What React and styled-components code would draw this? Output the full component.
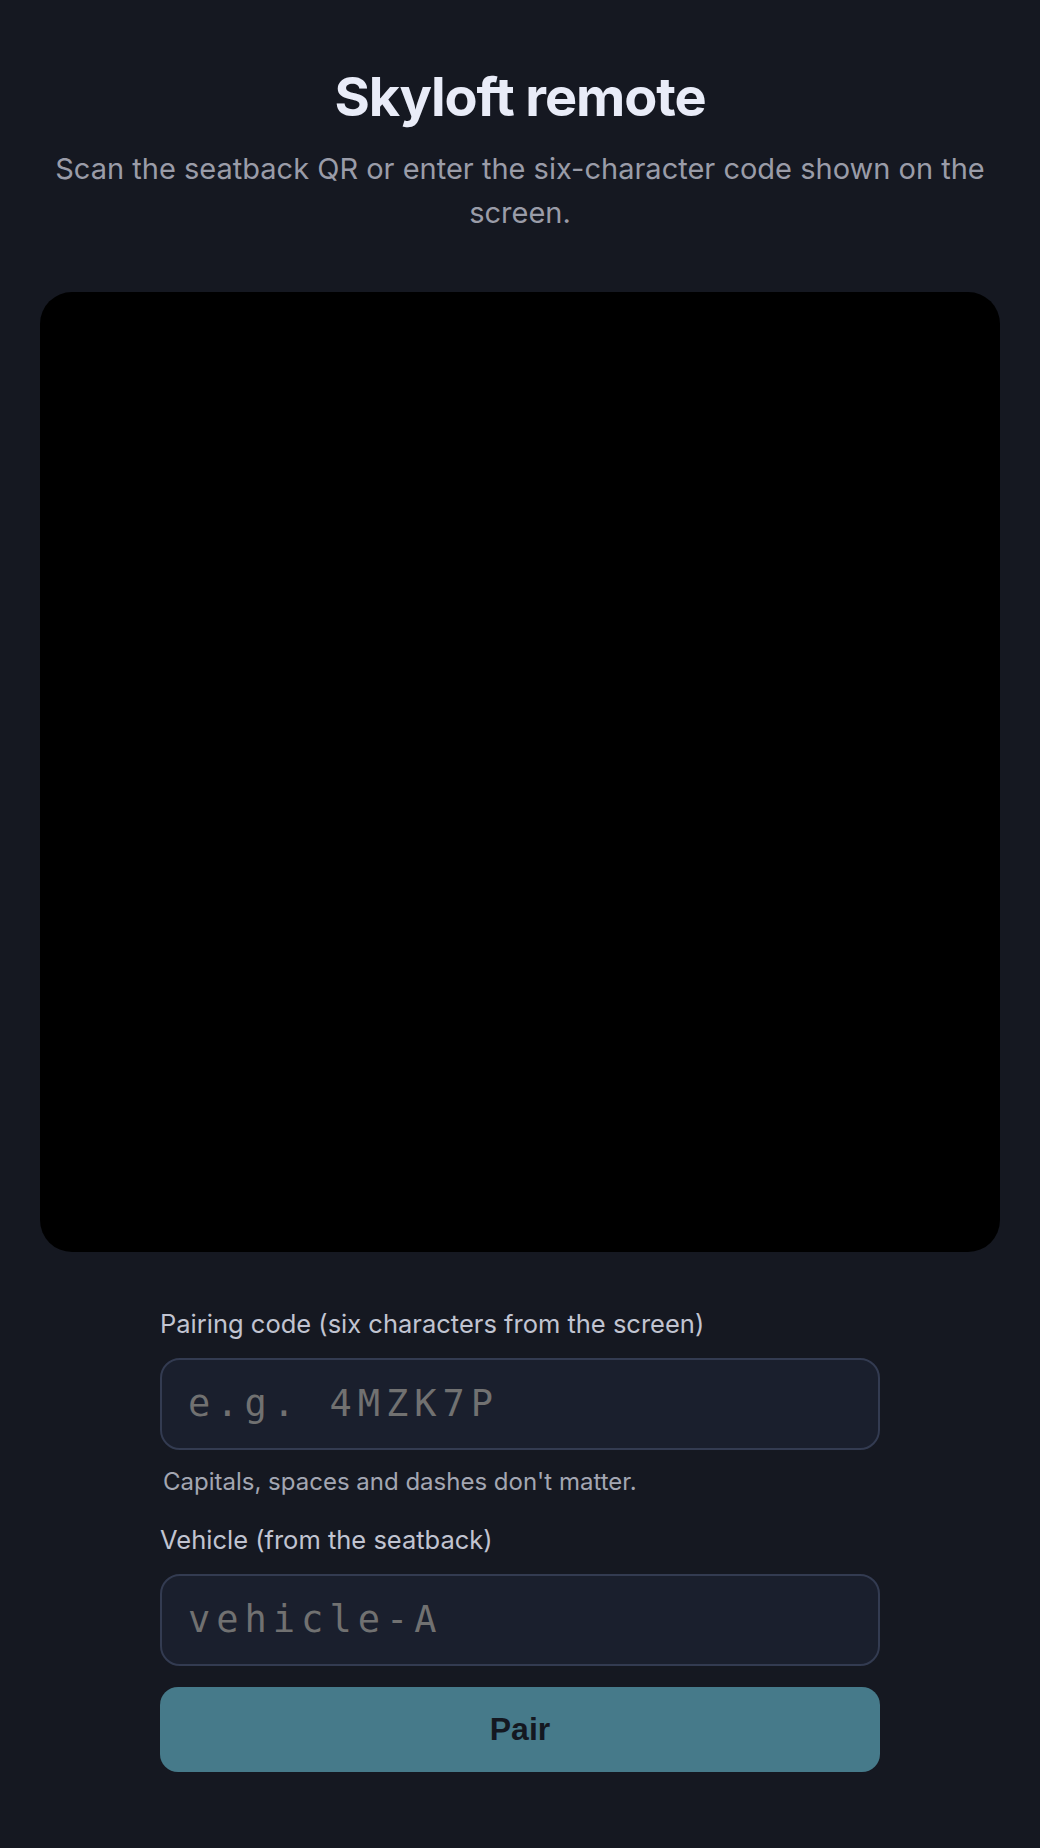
import React from "react";
import styled, { createGlobalStyle } from "styled-components";

const GlobalStyle = createGlobalStyle`
  html, body {
    margin: 0;
    padding: 0;
    background: #151821;
  }
  body {
    font-family: Inter, "Noto Sans", sans-serif;
    color: #e9ecf8;
  }
  * { box-sizing: border-box; }
`;

const Page = styled.main`
  display: flex;
  flex-direction: column;
  align-items: center;
  padding: 65px 40px 78px;
  min-height: 1848px;
  background: #151821;
`;

const Title = styled.h1`
  margin: 0;
  font-family: Inter, sans-serif;
  font-size: 54px;
  line-height: 64.8px;
  font-weight: 700;
  letter-spacing: -0.02em;
  color: #e9ecf8;
  text-align: center;
`;

const Subtitle = styled.p`
  margin: 17px 0 0;
  font-family: Inter, sans-serif;
  font-size: 29px;
  line-height: 44px;
  color: #9a9ca8;
  text-align: center;
`;

const Viewfinder = styled.div`
  margin-top: 57px;
  width: 960px;
  height: 960px;
  background: #000;
  border-radius: 32px;
  overflow: hidden;
`;

const Form = styled.form`
  margin-top: 54px;
  width: 720px;
  display: flex;
  flex-direction: column;
`;

const Label = styled.label`
  font-family: Inter, sans-serif;
  font-size: 25.5px;
  line-height: 36px;
  color: #c1c4d1;
  margin: ${(p) => p.$top || 0}px 0 16px;
`;

const CodeInput = styled.input`
  width: 100%;
  height: 92px;
  padding: 0 26px;
  background: #1a1f2d;
  border: 2px solid #333b51;
  border-radius: 20px;
  font-family: "DejaVu Sans Mono", monospace;
  font-size: 37px;
  letter-spacing: 6px;
  color: #e9ecf8;
  outline: none;
  &::placeholder {
    color: #717171;
  }
`;

const Hint = styled.p`
  margin: 15.5px 0 0;
  padding-left: 3px;
  font-family: Inter, sans-serif;
  font-size: 24px;
  line-height: 33px;
  color: #a3a6b2;
`;

const PairButton = styled.button`
  margin-top: 21px;
  width: 100%;
  height: 85px;
  border: none;
  border-radius: 18px;
  background: #467a8a;
  color: #141821;
  font-family: "Liberation Sans", Arial, sans-serif;
  font-size: 32px;
  font-weight: 700;
  cursor: pointer;
`;

export default function App() {
  return (
    <>
      <GlobalStyle />
      <Page>
        <Title>Skyloft remote</Title>
        <Subtitle>
          Scan the seatback QR or enter the six-character code shown on the screen.
        </Subtitle>
        <Viewfinder aria-label="Camera viewfinder" />
        <Form onSubmit={(e) => e.preventDefault()}>
          <Label htmlFor="code">Pairing code (six characters from the screen)</Label>
          <CodeInput id="code" placeholder="e.g. 4MZK7P" autoComplete="off" />
          <Hint>Capitals, spaces and dashes don't matter.</Hint>
          <Label htmlFor="vehicle" $top={23.5}>Vehicle (from the seatback)</Label>
          <CodeInput id="vehicle" placeholder="vehicle-A" autoComplete="off" />
          <PairButton type="submit">Pair</PairButton>
        </Form>
      </Page>
    </>
  );
}
